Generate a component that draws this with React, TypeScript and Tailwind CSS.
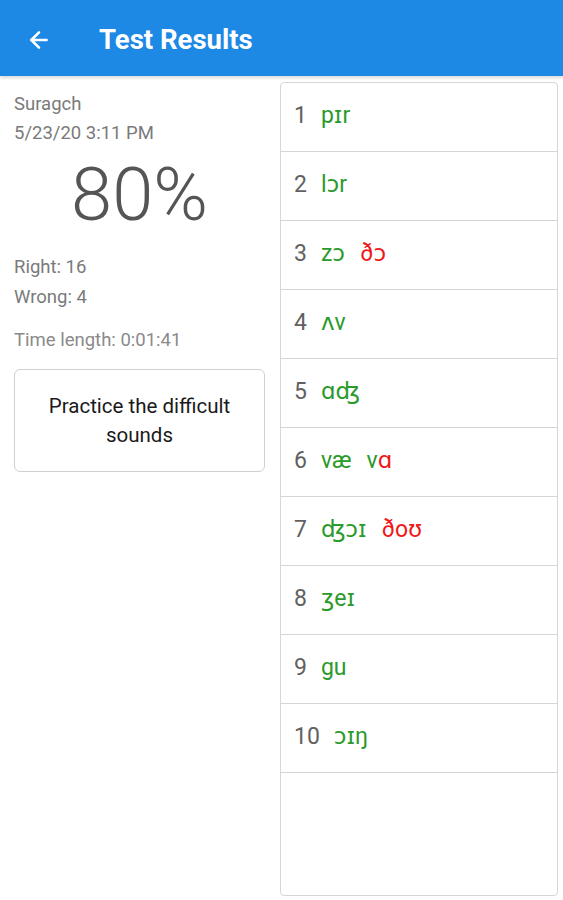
import { ArrowLeft } from "lucide-react";

type Seg = { t: string; red?: boolean };

const results: Seg[][][] = [
  [[{ t: "pɪr" }]],
  [[{ t: "lɔr" }]],
  [[{ t: "zɔ" }], [{ t: "ðɔ", red: true }]],
  [[{ t: "ʌv" }]],
  [[{ t: "ɑʤ" }]],
  [[{ t: "væ" }], [{ t: "v" }, { t: "ɑ", red: true }]],
  [[{ t: "ʤɔɪ" }], [{ t: "ðoʊ", red: true }]],
  [[{ t: "ʒeɪ" }]],
  [[{ t: "gu" }]],
  [[{ t: "ɔɪŋ" }]],
];

export default function App() {
  return (
    <div
      className="w-[563px] h-[900px] bg-white flex flex-col overflow-hidden"
      style={{ fontFamily: 'Roboto, "DejaVu Sans", sans-serif' }}
    >
      {/* Toolbar */}
      <div className="h-[76px] pt-[4px] bg-[#1e88e5] flex items-center shrink-0 shadow-[0_2px_3px_rgba(0,0,0,0.15)]">
        <ArrowLeft className="ml-[26px] text-white" size={26} strokeWidth={2.4} />
        <span className="ml-[47px] text-white text-[27.5px] font-bold">Test Results</span>
      </div>

      <div className="flex flex-1 min-h-0">
        {/* Summary column */}
        <div className="w-[280px] shrink-0 pl-[14px] pr-[15px] pt-[14px] text-[#7a7a7a] text-[18.5px]">
          <div className="leading-[29px]">Suragch</div>
          <div className="leading-[29px]">5/23/20 3:11 PM</div>
          <div className="text-center text-[74px] leading-[78px] mt-[8px] font-light text-[#555]">80%</div>
          <div className="leading-[30px] mt-[18px]">Right: 16</div>
          <div className="leading-[30px]">Wrong: 4</div>
          <div className="leading-[30px] mt-[13px] text-[#8a8a8a]">Time length: 0:01:41</div>
          <button className="mt-[14px] w-[251px] h-[103px] border border-[#d0d0d0] rounded-[6px] text-[#1a1a1a] text-[20.5px] leading-[29px] px-4">
            Practice the difficult sounds
          </button>
        </div>

        {/* Results list */}
        <div className="flex-1 mt-[6px] mr-[5px] mb-[4px] border border-[#d6d6d6] rounded-[4px] flex flex-col">
          {results.map((words, i) => (
            <div
              key={i}
              className="h-[69px] border-b border-[#d6d6d6] flex items-center pl-[13px] pb-[2px] text-[23px]"
            >
              <span className="text-[#616161]">{i + 1}</span>
              <div className="ml-[14px] flex gap-[15px]">
                {words.map((w, j) => (
                  <span key={j}>
                    {w.map((s, k) => (
                      <span key={k} className={s.red ? "text-[#f01818]" : "text-[#2a9a2a]"}>
                        {s.t}
                      </span>
                    ))}
                  </span>
                ))}
              </div>
            </div>
          ))}
        </div>
      </div>
    </div>
  );
}
